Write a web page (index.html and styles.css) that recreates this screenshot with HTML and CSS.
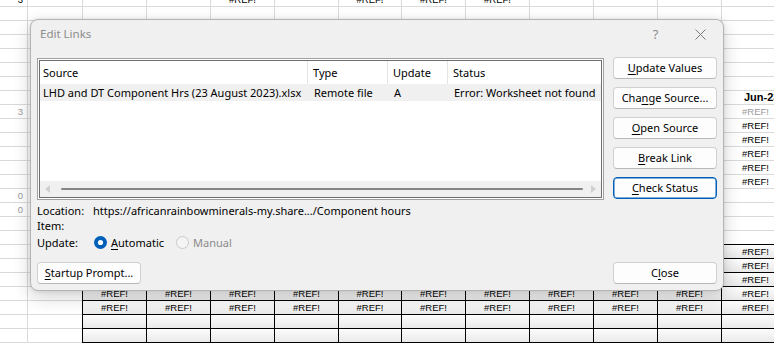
FILE: index.html
```html
<!DOCTYPE html>
<html>
<head>
<meta charset="utf-8">
<link rel="stylesheet" href="styles.css">
</head>
<body>
<div class="sheet">
  <div class="row"><span class="num">3</span><span></span><span></span><span></span><span>#REF!</span><span></span><span>#REF!</span><span>#REF!</span><span>#REF!</span><span></span><span></span><span></span><span></span></div>
  <div class="row"><span></span><span></span><span></span><span></span><span></span><span></span><span></span><span></span><span></span><span></span><span></span><span></span><span></span></div>
  <div class="row"><span></span><span></span><span></span><span></span><span></span><span></span><span></span><span></span><span></span><span></span><span></span><span></span><span></span></div>
  <div class="row"><span></span><span></span><span></span><span></span><span></span><span></span><span></span><span></span><span></span><span></span><span></span><span></span><span></span></div>
  <div class="row"><span></span><span></span><span></span><span></span><span></span><span></span><span></span><span></span><span></span><span></span><span></span><span></span><span></span></div>
  <div class="row"><span></span><span></span><span></span><span></span><span></span><span></span><span></span><span></span><span></span><span></span><span></span><span></span><span></span></div>
  <div class="row"><span></span><span></span><span></span><span></span><span></span><span></span><span></span><span></span><span></span><span></span><span></span><span></span><span></span></div>
  <div class="row"><span></span><span></span><span></span><span></span><span></span><span></span><span></span><span></span><span></span><span></span><span></span><span></span><span class="last head">Jun-23</span></div>
  <div class="row"><span class="num grey">3</span><span></span><span></span><span></span><span></span><span></span><span></span><span></span><span></span><span></span><span></span><span></span><span class="last grey">#REF!</span></div>
  <div class="row"><span></span><span></span><span></span><span></span><span></span><span></span><span></span><span></span><span></span><span></span><span></span><span></span><span class="last">#REF!</span></div>
  <div class="row"><span></span><span></span><span></span><span></span><span></span><span></span><span></span><span></span><span></span><span></span><span></span><span></span><span class="last">#REF!</span></div>
  <div class="row"><span></span><span></span><span></span><span></span><span></span><span></span><span></span><span></span><span></span><span></span><span></span><span></span><span class="last">#REF!</span></div>
  <div class="row"><span></span><span></span><span></span><span></span><span></span><span></span><span></span><span></span><span></span><span></span><span></span><span></span><span class="last">#REF!</span></div>
  <div class="row"><span></span><span></span><span></span><span></span><span></span><span></span><span></span><span></span><span></span><span></span><span></span><span></span><span class="last">#REF!</span></div>
  <div class="row"><span class="num grey">0</span><span></span><span></span><span></span><span></span><span></span><span></span><span></span><span></span><span></span><span></span><span></span><span></span></div>
  <div class="row"><span class="num grey">0</span><span></span><span></span><span></span><span></span><span></span><span></span><span></span><span></span><span></span><span></span><span></span><span></span></div>
  <div class="row"><span></span><span></span><span></span><span></span><span></span><span></span><span></span><span></span><span></span><span></span><span></span><span></span><span></span></div>
  <div class="row"><span></span><span></span><span></span><span></span><span></span><span></span><span></span><span></span><span></span><span></span><span></span><span></span><span></span></div>
  <div class="row tbl"><span></span><span></span><span></span><span></span><span></span><span></span><span></span><span></span><span></span><span></span><span></span><span></span><span class="last">#REF!</span></div>
  <div class="row tbl"><span></span><span></span><span></span><span></span><span></span><span></span><span></span><span></span><span></span><span></span><span></span><span></span><span class="last">#REF!</span></div>
  <div class="row tbl"><span></span><span></span><span></span><span></span><span></span><span></span><span></span><span></span><span></span><span></span><span></span><span></span><span class="last">#REF!</span></div>
  <div class="row tbl"><span></span><span></span><span>#REF!</span><span>#REF!</span><span>#REF!</span><span>#REF!</span><span>#REF!</span><span>#REF!</span><span>#REF!</span><span>#REF!</span><span>#REF!</span><span>#REF!</span><span class="last">#REF!</span></div>
  <div class="row tbl"><span></span><span></span><span>#REF!</span><span>#REF!</span><span>#REF!</span><span>#REF!</span><span>#REF!</span><span>#REF!</span><span>#REF!</span><span>#REF!</span><span>#REF!</span><span>#REF!</span><span class="last">#REF!</span></div>
  <div class="row tbl"><span></span><span></span><span></span><span></span><span></span><span></span><span></span><span></span><span></span><span></span><span></span><span></span><span></span></div>
  <div class="row tbl"><span></span><span></span><span></span><span></span><span></span><span></span><span></span><span></span><span></span><span></span><span></span><span></span><span></span></div>
  <div class="row tbl"><span></span><span></span><span></span><span></span><span></span><span></span><span></span><span></span><span></span><span></span><span></span><span></span><span></span></div>
</div>

<div class="dialog">
  <div class="titlebar">
    <div class="title">Edit Links</div>
    <div class="tb-btn help">?</div>
    <div class="tb-btn close-x">
      <svg width="11" height="11" viewBox="0 0 11 11"><path d="M0.5 0.5 L10.5 10.5 M10.5 0.5 L0.5 10.5" stroke="#7a7a7a" stroke-width="1" fill="none"/></svg>
    </div>
  </div>

  <div class="body">
    <div class="list">
      <div class="list-in">
        <div class="lrow lhead">
          <div class="cell c1">Source</div>
          <div class="cell c2">Type</div>
          <div class="cell c3">Update</div>
          <div class="cell c4">Status</div>
        </div>
        <div class="lrow ldata">
          <div class="cell c1">LHD and DT Component Hrs (23 August 2023).xlsx</div>
          <div class="cell c2">Remote file</div>
          <div class="cell c3">A</div>
          <div class="cell c4">Error: Worksheet not found</div>
        </div>
        <div class="lfill"></div>
        <div class="hscroll">
          <div class="arrow">
            <svg width="6" height="8" viewBox="0 0 6 8"><path d="M5 0 L0 4 L5 8 Z" fill="#d0d0d0"/></svg>
          </div>
          <div class="thumb"></div>
          <div class="arrow">
            <svg width="6" height="8" viewBox="0 0 6 8"><path d="M1 0 L6 4 L1 8 Z" fill="#d0d0d0"/></svg>
          </div>
        </div>
      </div>
    </div>
    <div class="btns">
      <div class="btn"><u>U</u>pdate Values</div>
      <div class="btn">Cha<u>n</u>ge Source...</div>
      <div class="btn"><u>O</u>pen Source</div>
      <div class="btn"><u>B</u>reak Link</div>
      <div class="btn default"><u>C</u>heck Status</div>
    </div>
  </div>

  <div class="info">
    <div class="irow"><div class="lbl">Location:</div><div class="val">https://africanrainbowminerals-my.share.../Component hours</div></div>
    <div class="irow"><div class="lbl">Item:</div><div class="val"></div></div>
    <div class="irow upd"><div class="lbl">Update:</div>
      <div class="radio">
        <svg width="13" height="13" viewBox="0 0 13 13"><circle cx="6.5" cy="6.5" r="6.5" fill="#005fb8"/><circle cx="6.5" cy="6.5" r="2.6" fill="#fff"/></svg>
        <span><u>A</u>utomatic</span>
      </div>
      <div class="radio off">
        <svg width="13" height="13" viewBox="0 0 13 13"><circle cx="6.5" cy="6.5" r="6" fill="#f4f4f4" stroke="#c9c9c9" stroke-width="1"/></svg>
        <span>Manual</span>
      </div>
    </div>
  </div>

  <div class="footer">
    <div class="btn"><u>S</u>tartup Prompt...</div>
    <div class="btn">C<u>l</u>ose</div>
  </div>
</div>
</body>
</html>
```

FILE: styles.css
```css
html, body {
  margin: 0;
  padding: 0;
  background: #fff;
  overflow: hidden;
}
body {
  width: 774px;
  height: 343px;
  position: relative;
}

/* ---------- spreadsheet backdrop ---------- */
.sheet {
  margin-top: -8px;
  font-family: "Liberation Sans", Arial, sans-serif;
  font-size: 9.5px;
  color: #000;
}
.row {
  display: grid;
  grid-template-columns: 27px 55px 64px 64px 64px 64px 63px 64px 64px 64px 64px 64px 64px;
  height: 14px;
}
.row > span {
  box-sizing: border-box;
  border-left: 1px solid #dadada;
  border-top: 1px solid #dadada;
  height: 14px;
  line-height: 13px;
  text-align: center;
  white-space: nowrap;
  overflow: hidden;
}
.row > span:first-child { border-left: none; }
.row > span.num { text-align: right; padding-right: 4px; }
.row > span.last { text-align: left; padding-left: 20px; }
.row > span.head { font-weight: bold; padding-left: 22px; font-size: 11px; }
.row > span.grey { color: #9a9a9a; }

.row.tbl > span:nth-child(n+3) {
  border-left-color: #000;
  border-top-color: #000;
  background: linear-gradient(to bottom, #fdfdfd, #e9e9e9);
}

/* ---------- dialog ---------- */
.dialog {
  position: absolute;
  left: 30px;
  top: 19px;
  width: 694px;
  height: 272px;
  box-sizing: border-box;
  background: #f0f0f0;
  border: 1px solid #b4b4b4;
  border-radius: 8px;
  box-shadow: 0 6px 18px rgba(0, 0, 0, 0.18), 0 0 4px rgba(0, 0, 0, 0.10);
  padding: 0 6px 6px 6px;
  display: flex;
  flex-direction: column;
  font-family: "Noto Sans", "Open Sans", sans-serif;
  font-size: 11px;
  color: #000;
}

.titlebar {
  display: flex;
  height: 37px;
  margin: 0 -6px;
  padding-left: 9px;
}
.title {
  flex: 1;
  line-height: 28px;
  font-size: 11.5px;
  color: #8c8c8c;
}
.tb-btn {
  width: 45px;
  height: 28px;
  display: flex;
  align-items: center;
  justify-content: center;
  color: #8c8c8c;
}
.help { font-size: 13px; }

.body {
  display: flex;
  gap: 9px;
  align-items: flex-start;
}
.list {
  width: 567px;
  height: 142px;
  margin-top: 1px;
  box-sizing: border-box;
  border: 1px solid #a0a0a0;
  padding: 1px;
  background: #fff;
}
.list-in {
  height: 100%;
  box-sizing: border-box;
  border: 1px solid #6e6e6e;
  display: flex;
  flex-direction: column;
  background: #fff;
}
.lrow {
  display: grid;
  grid-template-columns: 268px 80px 60px 1fr;
  white-space: nowrap;
}
.lhead { height: 23px; line-height: 23px; }
.lhead .cell { border-right: 1px solid #e5e5e5; }
.lhead .cell.c4 { border-right: none; }
.ldata { height: 17px; line-height: 17px; background: #f0f0f0; }
.cell { padding-left: 5px; overflow: hidden; }
.cell.c1 { padding-left: 3px; }
.ldata .cell.c2, .ldata .cell.c3, .ldata .cell.c4 { padding-left: 6px; }
.lhead .cell.c2, .lhead .cell.c3, .lhead .cell.c4 { padding-left: 5px; }
.lfill { flex: 1; }
.hscroll {
  height: 16px;
  background: #f0f0f0;
  display: flex;
  align-items: center;
}
.arrow {
  width: 16px;
  height: 16px;
  display: flex;
  align-items: center;
  justify-content: center;
}
.thumb {
  flex: 1;
  height: 2px;
  background: #858585;
  border-radius: 1px;
  margin: 0 2px 0 5px;
}

.btns {
  display: flex;
  flex-direction: column;
  gap: 8px;
}
.btn {
  width: 104px;
  height: 22px;
  box-sizing: border-box;
  background: #fdfdfd;
  border: 1px solid #d0d0d0;
  border-bottom-color: #b8b8b8;
  border-radius: 4px;
  text-align: center;
  line-height: 20px;
  white-space: nowrap;
}
.btn.default {
  border: 1px solid #005fb8;
  box-shadow: inset 0 0 0 0.5px #005fb8;
}
u { text-decoration-thickness: 1px; text-underline-offset: 2px; }

.info { margin-top: 3px; }
.irow {
  display: flex;
  height: 15px;
  line-height: 15px;
  align-items: center;
}
.irow.upd { height: 18px; }
.lbl { width: 56px; }
.radio {
  display: flex;
  align-items: center;
  gap: 4px;
  margin-left: 1px;
  margin-right: 11px;
}
.radio svg { display: block; }
.radio.off { color: #8a8a8a; }

.footer {
  margin-top: auto;
  display: flex;
  justify-content: space-between;
}
```
